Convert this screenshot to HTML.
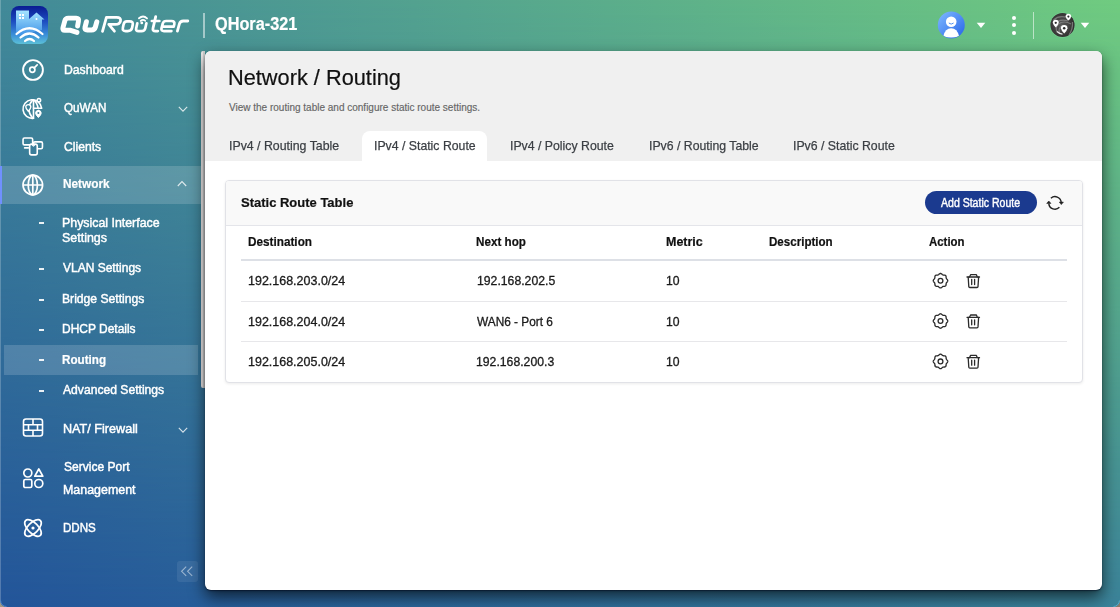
<!DOCTYPE html>
<html><head><meta charset="utf-8">
<style>
*{margin:0;padding:0;box-sizing:border-box}
html,body{width:1120px;height:607px;overflow:hidden}
body{position:relative;font-family:"Liberation Sans",sans-serif;
background:linear-gradient(to right,#23559a,#3b8399);}
#bgtop{position:absolute;left:0;top:0;width:1120px;height:607px;background:linear-gradient(to right,#428a98,#70cb80);-webkit-mask-image:linear-gradient(to bottom,#000,rgba(0,0,0,0));mask-image:linear-gradient(to bottom,#000,rgba(0,0,0,0))}
.a{position:absolute}
.t{position:absolute;white-space:nowrap;line-height:1;transform-origin:0 0}
.dash{position:absolute;left:38.6px;width:5.8px;height:2px;background:rgba(255,255,255,0.9)}
</style></head>
<body>
<div id="bgtop"></div>
<div class="a" style="left:0;top:0;width:1px;height:607px;background:rgba(255,255,255,0.22)"></div>

<!-- logo -->
<div class="a" style="left:11px;top:6px;width:37px;height:38px;border-radius:8px;background:linear-gradient(#0a1c92 0%,#1d4cc0 40%,#3a8ed8 75%,#5cc0d8 100%);overflow:hidden">
  <svg width="37" height="38" viewBox="0 0 37 38">
    <defs><linearGradient id="bld" x1="0" y1="0" x2="0" y2="1"><stop offset="0" stop-color="#a5e4ff"/><stop offset="1" stop-color="#3d90e6"/></linearGradient></defs>
    <path d="M5 4.5 H18 V13 L25.5 6.5 L33.5 13.5 L31 13.5 V24 L5 30 Z" fill="url(#bld)"/>
    <rect x="8" y="8" width="2" height="2" fill="#fff"/><rect x="11" y="8" width="2" height="2" fill="#fff"/>
    <rect x="8" y="11" width="2" height="2" fill="#fff"/><rect x="11" y="11" width="2" height="2" fill="#fff"/>
    <circle cx="25.5" cy="13" r="1" fill="#fff"/>
    <path d="M5.5 28 Q18.5 16.5 31.5 28" stroke="#fff" stroke-width="2.2" fill="none" stroke-linecap="round"/>
    <path d="M9.5 31.5 Q18.5 23.5 27.5 31.5" stroke="#fff" stroke-width="2.2" fill="none" stroke-linecap="round"/>
    <path d="M14 35 Q18.5 31 23 35" stroke="#fff" stroke-width="2.2" fill="none" stroke-linecap="round"/>
  </svg>
</div>
<!-- QuRouter wordmark -->
<svg class="a" style="left:55px;top:10px" width="140" height="30" viewBox="55 10 140 30">
  <g fill="none" stroke="#fff" stroke-linecap="round" stroke-linejoin="round">
    <path d="M77.6 26 L78.5 21 Q79.1 18.1 76.2 18.1 H68.2 Q65.5 18.1 64.8 20.8 L62.9 27.8 Q62.2 30.3 64.8 30.3 H70.6 L77 32.4" stroke-width="4.9"/>
    <path d="M86.4 21.8 L85 27.4 Q84.4 29.9 87.2 29.9 H91.6 Q94.6 29.9 95.4 27 L96.8 21.8" stroke-width="5"/>
    <path d="M102.5 31.3 L106.4 17.4 H116.6 Q121.2 17.4 120.5 20.9 Q119.8 24.4 115.4 24.4 H108.8 L114.4 31.2" stroke-width="2.8"/>
    <path d="M126.8 21.3 H129.6 Q133.4 21.3 132.7 24.8 L132.1 27.8 Q131.4 31.1 127.7 31.1 H125.6 Q122.2 31.1 122.9 27.7 L123.5 24.7 Q124.2 21.3 126.8 21.3 Z" stroke-width="2.7"/>
    <path d="M137.3 23.3 L136.2 28.2 Q135.5 31.1 138.6 31.1 H141.5 Q144.6 31.1 145.3 28.2 L146.4 23.3" stroke-width="2.7"/>
    <path d="M139 18.3 Q143.2 14.6 147 18.4" stroke-width="1.9"/>
    <path d="M140.6 20.9 Q143 18.8 145.3 20.9" stroke-width="1.6"/>
    <circle cx="141.8" cy="22.9" r="1.4" fill="#fff" stroke="none"/>
    <path d="M155.7 16.6 L153 28.2 Q152.3 31.1 155.4 31.1 H157.8" stroke-width="2.8"/>
    <path d="M151.8 21 H159.4" stroke-width="2.6"/>
    <path d="M171.4 31.1 H164 Q160.9 31.1 161.5 28.4 L162.8 23.4 Q163.5 21 166.2 21 H171.6 Q175 21 174.3 24.2 L173.7 26.7 H162.5" stroke-width="2.7"/>
    <path d="M177.4 31.1 L179.4 23.8 Q180.2 21 183.3 21 H187.8" stroke-width="2.8"/>
  </g>
</svg>
<div class="a" style="left:203px;top:12.5px;width:2px;height:25px;background:rgba(255,255,255,0.5)"></div>

<!-- top right icons -->
<svg class="a" style="left:937px;top:11px" width="29" height="29" viewBox="0 0 29 29">
  <defs><linearGradient id="av" x1="0" y1="0" x2="1" y2="1"><stop offset="0" stop-color="#80baff"/><stop offset="1" stop-color="#2563e8"/></linearGradient>
  <clipPath id="avc"><circle cx="14.3" cy="14" r="13.2"/></clipPath></defs>
  <circle cx="14.3" cy="14" r="13.5" fill="url(#av)"/>
  <g clip-path="url(#avc)">
    <circle cx="14.2" cy="10.7" r="5.3" fill="#fff"/>
    <path d="M6.3 25.2 Q8.2 17.2 14.2 17.2 Q20.2 17.2 22.1 25.2 Q14.2 27.6 6.3 25.2 Z" fill="#fff"/>
    <path d="M11.8 12 Q14.2 14.2 16.6 12" stroke="#4f8ff0" stroke-width="1" fill="none"/>
  </g>
</svg>
<svg class="a" style="left:976px;top:22px" width="10" height="7"><path d="M0.7 0.8 H9.3 L5 6 Z" fill="#fff"/></svg>
<div class="a" style="left:1011.8px;top:15.5px;width:4px;height:4px;border-radius:50%;background:#fff"></div>
<div class="a" style="left:1011.8px;top:23.1px;width:4px;height:4px;border-radius:50%;background:#fff"></div>
<div class="a" style="left:1011.8px;top:30.7px;width:4px;height:4px;border-radius:50%;background:#fff"></div>
<div class="a" style="left:1033px;top:12px;width:1px;height:26.5px;background:rgba(255,255,255,0.55)"></div>
<svg class="a" style="left:1049px;top:12px" width="27" height="27" viewBox="0 0 27 27">
  <defs><radialGradient id="gl" cx="0.45" cy="0.5" r="0.6"><stop offset="0" stop-color="#5a5a5a"/><stop offset="0.7" stop-color="#3a3838"/><stop offset="1" stop-color="#2a2829"/></radialGradient></defs>
  <circle cx="13.5" cy="13" r="12.6" fill="#7edc9e" opacity="0.6"/>
  <circle cx="13.5" cy="13" r="12.1" fill="url(#gl)"/>
  <g fill="none" stroke="#8c8c8c" stroke-width="1.2" opacity="0.75">
    <path d="M4.5 8 Q10 3 18 5.5"/><path d="M5 12 Q11 6.5 19 9"/><path d="M8 20 Q5 14 12 10.5 Q17 9 22 12"/><path d="M11 22 Q8 16 14 13.5"/><path d="M20 23 Q24 17 23.5 10"/>
  </g>
  <path d="M8 19.5 Q10.5 22 13.5 22.2" stroke="#e8e8e8" stroke-width="1.3" fill="none"/>
  <path d="M16.60 4.60 A2.8 2.8 0 1 1 22.20 4.60 Q21.64 7.12 19.40 8.60 Q17.16 7.12 16.60 4.60 Z" fill="#fff"/><circle cx="19.4" cy="4.6" r="1.06" fill="#2a2a2a"/>
  <path d="M3.75 10.80 A3.0 3.0 0 1 1 9.75 10.80 Q9.15 13.50 6.75 15.40 Q4.35 13.50 3.75 10.80 Z" fill="#fff"/><circle cx="6.75" cy="10.8" r="1.14" fill="#2a2a2a"/>
  <path d="M11.90 16.30 A3.3 3.3 0 1 1 18.50 16.30 Q17.84 19.27 15.20 21.60 Q12.56 19.27 11.90 16.30 Z" fill="#fff"/><circle cx="15.2" cy="16.3" r="1.25" fill="#2a2a2a"/>
</svg>
<svg class="a" style="left:1080px;top:22px" width="10" height="7"><path d="M0.7 0.8 H9.3 L5 6 Z" fill="#fff"/></svg>

<!-- sidebar highlights -->
<div class="a" style="left:0;top:165.5px;width:201px;height:38px;background:rgba(255,255,255,0.155)"></div>
<div class="a" style="left:0;top:165.5px;width:2.2px;height:38px;background:#7090ff"></div>
<div class="a" style="left:4px;top:345px;width:194px;height:30px;background:rgba(255,255,255,0.155)"></div>

<div class="dash" style="top:222px"></div>
<div class="dash" style="top:268px"></div>
<div class="dash" style="top:298.6px"></div>
<div class="dash" style="top:328.8px"></div>
<div class="dash" style="top:359.4px"></div>
<div class="dash" style="top:389.7px"></div>

<!-- chevrons -->
<svg class="a" style="left:178px;top:106px" width="11" height="7"><path d="M0.8 0.8 L5 5.2 L9.2 0.8" stroke="rgba(255,255,255,0.8)" stroke-width="1.1" fill="none"/></svg>
<svg class="a" style="left:176.5px;top:180px" width="11" height="7"><path d="M0.8 6 L5 1.5 L9.2 6" stroke="rgba(255,255,255,0.8)" stroke-width="1.1" fill="none"/></svg>
<svg class="a" style="left:178px;top:426.5px" width="11" height="7"><path d="M0.8 0.8 L5 5.2 L9.2 0.8" stroke="rgba(255,255,255,0.8)" stroke-width="1.1" fill="none"/></svg>

<!-- sidebar icons -->
<svg class="a" style="left:21px;top:58px" width="24" height="24" viewBox="0 0 24 24" fill="none" stroke="#fff">
  <circle cx="12" cy="12" r="9.9" stroke-width="1.9"/><circle cx="11.3" cy="11.8" r="2.6" stroke-width="1.7"/><path d="M13.2 9.9 L16.2 6.9" stroke-width="1.7" stroke-linecap="round"/>
</svg>
<svg class="a" style="left:21px;top:96px" width="24" height="24" viewBox="0 0 24 24" fill="none" stroke="#fff" stroke-width="1.6" stroke-linecap="round" stroke-linejoin="round">
  <path d="M12.5 22.3 A9.3 9.3 0 1 1 20.57 12.2"/>
  <path d="M12.5 12.2 H20.6"/><path d="M12.5 3.8 V22.3"/>
  <path d="M11.8 3.8 Q3.8 13 11.8 22.3"/><path d="M12.5 3.8 Q16.6 7 17 12.2"/>
  <circle cx="17.9" cy="4.2" r="1.7" fill="#3b8199"/>
  <path d="M7.3 8.6 a2.5 2.5 0 0 1 2.5 2.5 q0 1.6 -2.5 4.2 q-2.5 -2.6 -2.5 -4.2 a2.5 2.5 0 0 1 2.5 -2.5 z" fill="#3b8199" stroke-width="1.4"/>
  <path d="M17.4 14.3 a2.8 2.8 0 0 1 2.8 2.8 q0 1.8 -2.8 4.4 q-2.8 -2.6 -2.8 -4.4 a2.8 2.8 0 0 1 2.8 -2.8 z" fill="#fff" stroke-width="1"/>
  <circle cx="17.4" cy="17.1" r="1" fill="#3b8199" stroke="none"/>
</svg>
<svg class="a" style="left:21px;top:134px" width="24" height="24" viewBox="0 0 24 24" fill="none" stroke="#fff" stroke-width="1.6" stroke-linejoin="round">
  <rect x="2.05" y="4.05" width="9.6" height="6.8" rx="1.4"/>
  <path d="M3.6 13.9 H7.4" stroke-linecap="round"/>
  <rect x="12.45" y="7.85" width="9" height="6.9" rx="1.4"/>
  <rect x="8.65" y="10.15" width="7.6" height="10.7" rx="1.8" fill="#3a7d9a"/>
  <path d="M10.7 10.6 L12.45 12.1 L14.2 10.6" stroke-width="1.1"/>
</svg>
<svg class="a" style="left:21px;top:172.5px" width="24" height="24" viewBox="0 0 24 24" fill="none" stroke="#fff" stroke-width="1.7">
  <circle cx="11.8" cy="12" r="9.8"/><ellipse cx="11.8" cy="12" rx="4.6" ry="9.8"/><path d="M11.8 2.2 V21.8 M2 12 H21.6"/>
</svg>
<svg class="a" style="left:21px;top:416px" width="24" height="24" viewBox="0 0 24 24" fill="none" stroke="#fff" stroke-width="1.6">
  <rect x="2.5" y="3" width="19" height="17" rx="2.5"/>
  <path d="M2.5 8.7 H21.5 M2.5 14.3 H21.5 M12 3 V8.7 M7.5 8.7 V14.3 M16.5 8.7 V14.3 M12 14.3 V20"/>
</svg>
<svg class="a" style="left:21px;top:466px" width="24" height="24" viewBox="0 0 24 24" fill="none" stroke="#fff" stroke-width="1.7">
  <circle cx="6.8" cy="7" r="4"/><path d="M17.8 3 L21.8 10.2 H13.8 Z" stroke-linejoin="round"/>
  <rect x="2.8" y="13.5" width="8" height="8" rx="1.6"/><circle cx="17.8" cy="17.5" r="4"/>
</svg>
<svg class="a" style="left:21px;top:515.5px" width="24" height="24" viewBox="0 0 24 24" fill="none" stroke="#fff" stroke-width="1.7">
  <ellipse cx="12" cy="12" rx="10.5" ry="5.2" transform="rotate(45 12 12)"/>
  <ellipse cx="12" cy="12" rx="10.5" ry="5.2" transform="rotate(-45 12 12)"/>
  <circle cx="12" cy="12" r="1.6" fill="#fff" stroke="none"/>
</svg>

<!-- scrollbar -->
<div class="a" style="left:201px;top:51px;width:4px;height:337px;border-radius:2px 0 0 2px;background:linear-gradient(90deg,#f0eaea 0,#f0eaea 2px,#d2d2d2 2px)"></div>

<!-- collapse button -->
<div class="a" style="left:177px;top:560.5px;width:21px;height:21.5px;border-radius:3px;background:rgba(255,255,255,0.08)"></div>
<svg class="a" style="left:177px;top:561px" width="21" height="21"><path d="M9.2 5.7 L4.6 10.3 L9.2 14.9 M15.2 5.7 L10.6 10.3 L15.2 14.9" stroke="rgba(255,255,255,0.5)" stroke-width="1.1" fill="none"/></svg>

<!-- main panel -->
<div class="a" style="left:205px;top:51px;width:897px;height:538.5px;background:#fff;border-radius:6px;box-shadow:0 1px 1.5px rgba(0,10,30,0.6),0 7px 16px rgba(0,0,0,0.65);overflow:hidden">
  <div class="a" style="left:0;top:0;width:897px;height:110px;background:#f0f0f0"></div>
  <div class="a" style="left:157px;top:80px;width:125px;height:30px;background:#fff;border-radius:8px 8px 0 0"></div>
  <!-- card -->
  <div class="a" style="left:19.5px;top:129px;width:858.5px;height:202.5px;border:1px solid #e1e2e7;border-radius:4px;box-shadow:0 1px 3px rgba(0,0,0,0.08);background:#fff;overflow:hidden">
    <div class="a" style="left:0;top:0;width:100%;height:44.5px;background:#f9f9f9;border-bottom:1px solid #e4e5ea"></div>
  </div>
  <div class="a" style="left:36px;top:208px;width:825.5px;height:2px;background:#dde0e6"></div>
  <div class="a" style="left:36px;top:250px;width:825.5px;height:1px;background:#e7e7ea"></div>
  <div class="a" style="left:36px;top:290px;width:825.5px;height:1px;background:#e7e7ea"></div>
  <div class="a" style="left:720px;top:140px;width:111.5px;height:23px;border-radius:12px;background:#1b3a8f"></div>
</div>

<!-- refresh icon -->
<svg class="a" style="left:1045px;top:193px" width="22" height="19" viewBox="0 0 22 19" fill="none" stroke="#222" stroke-width="1.45">
  <path d="M5.9 5.2 A6.2 6.2 0 0 1 16.2 9.3"/>
  <path d="M14.4 14.3 A6.2 6.2 0 0 1 3.8 10.6"/>
  <path d="M14.3 9.1 H18.4 L16.3 11.6 Z" fill="#222" stroke-width="0.6" stroke-linejoin="round"/>
  <path d="M1.7 10.4 H5.9 L3.8 8 Z" fill="#222" stroke-width="0.6" stroke-linejoin="round"/>
</svg>

<!-- action icons -->
<svg width="0" height="0" style="position:absolute">
  <defs>
    <g id="gear" fill="none" stroke="#2d2d2d" stroke-width="1.3">
      <path id="gp"/>
      <circle cx="9" cy="9" r="2.5"/>
    </g>
  </defs>
</svg>
<svg class="a" style="left:0;top:0;overflow:visible" width="1" height="1"><g fill="none" stroke="#2b2b2b" stroke-width="1.3"><path d="M947.75 280.70 L947.72 280.98 L947.63 281.26 L947.50 281.53 L947.32 281.78 L947.12 282.02 L946.91 282.24 L946.71 282.45 L946.53 282.66 L946.39 282.87 L946.27 283.09 L946.20 283.33 L946.15 283.58 L946.13 283.85 L946.12 284.15 L946.11 284.45 L946.09 284.76 L946.03 285.06 L945.94 285.35 L945.81 285.60 L945.63 285.83 L945.40 286.01 L945.15 286.14 L944.86 286.23 L944.56 286.29 L944.25 286.31 L943.95 286.32 L943.65 286.33 L943.38 286.35 L943.13 286.40 L942.89 286.47 L942.67 286.59 L942.46 286.73 L942.25 286.91 L942.04 287.11 L941.82 287.32 L941.58 287.52 L941.33 287.70 L941.06 287.83 L940.78 287.92 L940.50 287.95 L940.22 287.92 L939.94 287.83 L939.67 287.70 L939.42 287.52 L939.18 287.32 L938.96 287.11 L938.75 286.91 L938.54 286.73 L938.33 286.59 L938.11 286.47 L937.87 286.40 L937.62 286.35 L937.35 286.33 L937.05 286.32 L936.75 286.31 L936.44 286.29 L936.14 286.23 L935.85 286.14 L935.60 286.01 L935.37 285.83 L935.19 285.60 L935.06 285.35 L934.97 285.06 L934.91 284.76 L934.89 284.45 L934.88 284.15 L934.87 283.85 L934.85 283.58 L934.80 283.33 L934.73 283.09 L934.61 282.87 L934.47 282.66 L934.29 282.45 L934.09 282.24 L933.88 282.02 L933.68 281.78 L933.50 281.53 L933.37 281.26 L933.28 280.98 L933.25 280.70 L933.28 280.42 L933.37 280.14 L933.50 279.87 L933.68 279.62 L933.88 279.38 L934.09 279.16 L934.29 278.95 L934.47 278.74 L934.61 278.53 L934.73 278.31 L934.80 278.07 L934.85 277.82 L934.87 277.55 L934.88 277.25 L934.89 276.95 L934.91 276.64 L934.97 276.34 L935.06 276.05 L935.19 275.80 L935.37 275.57 L935.60 275.39 L935.85 275.26 L936.14 275.17 L936.44 275.11 L936.75 275.09 L937.05 275.08 L937.35 275.07 L937.62 275.05 L937.87 275.00 L938.11 274.93 L938.33 274.81 L938.54 274.67 L938.75 274.49 L938.96 274.29 L939.18 274.08 L939.42 273.88 L939.67 273.70 L939.94 273.57 L940.22 273.48 L940.50 273.45 L940.78 273.48 L941.06 273.57 L941.33 273.70 L941.58 273.88 L941.82 274.08 L942.04 274.29 L942.25 274.49 L942.46 274.67 L942.67 274.81 L942.89 274.93 L943.13 275.00 L943.38 275.05 L943.65 275.07 L943.95 275.08 L944.25 275.09 L944.56 275.11 L944.86 275.17 L945.15 275.26 L945.40 275.39 L945.63 275.57 L945.81 275.80 L945.94 276.05 L946.03 276.34 L946.09 276.64 L946.11 276.95 L946.12 277.25 L946.13 277.55 L946.15 277.82 L946.20 278.07 L946.27 278.31 L946.39 278.53 L946.53 278.74 L946.71 278.95 L946.91 279.16 L947.12 279.38 L947.32 279.62 L947.50 279.87 L947.63 280.14 L947.72 280.42 Z"/><circle cx="940.5" cy="280.7" r="2.4"/></g><g fill="none" stroke="#2b2b2b" stroke-width="1.3" stroke-linecap="round" stroke-linejoin="round" transform="translate(0 0.00)"><path d="M967 277 H979.5"/><path d="M969.5 277 L970.6 274.7 H976.4 L977.3 277"/><path d="M968.2 277.2 L968.8 286.6 Q968.9 287.5 969.8 287.5 H977 Q977.9 287.5 978 286.6 L978.6 277.2"/><path d="M971.7 279.5 V284.5 M974.6 279.5 V284.5"/></g></svg>
<svg class="a" style="left:0;top:0;overflow:visible" width="1" height="1"><g fill="none" stroke="#2b2b2b" stroke-width="1.3"><path d="M947.75 321.00 L947.72 321.28 L947.63 321.56 L947.50 321.83 L947.32 322.08 L947.12 322.32 L946.91 322.54 L946.71 322.75 L946.53 322.96 L946.39 323.17 L946.27 323.39 L946.20 323.63 L946.15 323.88 L946.13 324.15 L946.12 324.45 L946.11 324.75 L946.09 325.06 L946.03 325.36 L945.94 325.65 L945.81 325.90 L945.63 326.13 L945.40 326.31 L945.15 326.44 L944.86 326.53 L944.56 326.59 L944.25 326.61 L943.95 326.62 L943.65 326.63 L943.38 326.65 L943.13 326.70 L942.89 326.77 L942.67 326.89 L942.46 327.03 L942.25 327.21 L942.04 327.41 L941.82 327.62 L941.58 327.82 L941.33 328.00 L941.06 328.13 L940.78 328.22 L940.50 328.25 L940.22 328.22 L939.94 328.13 L939.67 328.00 L939.42 327.82 L939.18 327.62 L938.96 327.41 L938.75 327.21 L938.54 327.03 L938.33 326.89 L938.11 326.77 L937.87 326.70 L937.62 326.65 L937.35 326.63 L937.05 326.62 L936.75 326.61 L936.44 326.59 L936.14 326.53 L935.85 326.44 L935.60 326.31 L935.37 326.13 L935.19 325.90 L935.06 325.65 L934.97 325.36 L934.91 325.06 L934.89 324.75 L934.88 324.45 L934.87 324.15 L934.85 323.88 L934.80 323.63 L934.73 323.39 L934.61 323.17 L934.47 322.96 L934.29 322.75 L934.09 322.54 L933.88 322.32 L933.68 322.08 L933.50 321.83 L933.37 321.56 L933.28 321.28 L933.25 321.00 L933.28 320.72 L933.37 320.44 L933.50 320.17 L933.68 319.92 L933.88 319.68 L934.09 319.46 L934.29 319.25 L934.47 319.04 L934.61 318.83 L934.73 318.61 L934.80 318.37 L934.85 318.12 L934.87 317.85 L934.88 317.55 L934.89 317.25 L934.91 316.94 L934.97 316.64 L935.06 316.35 L935.19 316.10 L935.37 315.87 L935.60 315.69 L935.85 315.56 L936.14 315.47 L936.44 315.41 L936.75 315.39 L937.05 315.38 L937.35 315.37 L937.62 315.35 L937.87 315.30 L938.11 315.23 L938.33 315.11 L938.54 314.97 L938.75 314.79 L938.96 314.59 L939.18 314.38 L939.42 314.18 L939.67 314.00 L939.94 313.87 L940.22 313.78 L940.50 313.75 L940.78 313.78 L941.06 313.87 L941.33 314.00 L941.58 314.18 L941.82 314.38 L942.04 314.59 L942.25 314.79 L942.46 314.97 L942.67 315.11 L942.89 315.23 L943.13 315.30 L943.38 315.35 L943.65 315.37 L943.95 315.38 L944.25 315.39 L944.56 315.41 L944.86 315.47 L945.15 315.56 L945.40 315.69 L945.63 315.87 L945.81 316.10 L945.94 316.35 L946.03 316.64 L946.09 316.94 L946.11 317.25 L946.12 317.55 L946.13 317.85 L946.15 318.12 L946.20 318.37 L946.27 318.61 L946.39 318.83 L946.53 319.04 L946.71 319.25 L946.91 319.46 L947.12 319.68 L947.32 319.92 L947.50 320.17 L947.63 320.44 L947.72 320.72 Z"/><circle cx="940.5" cy="321.0" r="2.4"/></g><g fill="none" stroke="#2b2b2b" stroke-width="1.3" stroke-linecap="round" stroke-linejoin="round" transform="translate(0 40.30)"><path d="M967 277 H979.5"/><path d="M969.5 277 L970.6 274.7 H976.4 L977.3 277"/><path d="M968.2 277.2 L968.8 286.6 Q968.9 287.5 969.8 287.5 H977 Q977.9 287.5 978 286.6 L978.6 277.2"/><path d="M971.7 279.5 V284.5 M974.6 279.5 V284.5"/></g></svg>
<svg class="a" style="left:0;top:0;overflow:visible" width="1" height="1"><g fill="none" stroke="#2b2b2b" stroke-width="1.3"><path d="M947.75 361.40 L947.72 361.68 L947.63 361.96 L947.50 362.23 L947.32 362.48 L947.12 362.72 L946.91 362.94 L946.71 363.15 L946.53 363.36 L946.39 363.57 L946.27 363.79 L946.20 364.03 L946.15 364.28 L946.13 364.55 L946.12 364.85 L946.11 365.15 L946.09 365.46 L946.03 365.76 L945.94 366.05 L945.81 366.30 L945.63 366.53 L945.40 366.71 L945.15 366.84 L944.86 366.93 L944.56 366.99 L944.25 367.01 L943.95 367.02 L943.65 367.03 L943.38 367.05 L943.13 367.10 L942.89 367.17 L942.67 367.29 L942.46 367.43 L942.25 367.61 L942.04 367.81 L941.82 368.02 L941.58 368.22 L941.33 368.40 L941.06 368.53 L940.78 368.62 L940.50 368.65 L940.22 368.62 L939.94 368.53 L939.67 368.40 L939.42 368.22 L939.18 368.02 L938.96 367.81 L938.75 367.61 L938.54 367.43 L938.33 367.29 L938.11 367.17 L937.87 367.10 L937.62 367.05 L937.35 367.03 L937.05 367.02 L936.75 367.01 L936.44 366.99 L936.14 366.93 L935.85 366.84 L935.60 366.71 L935.37 366.53 L935.19 366.30 L935.06 366.05 L934.97 365.76 L934.91 365.46 L934.89 365.15 L934.88 364.85 L934.87 364.55 L934.85 364.28 L934.80 364.03 L934.73 363.79 L934.61 363.57 L934.47 363.36 L934.29 363.15 L934.09 362.94 L933.88 362.72 L933.68 362.48 L933.50 362.23 L933.37 361.96 L933.28 361.68 L933.25 361.40 L933.28 361.12 L933.37 360.84 L933.50 360.57 L933.68 360.32 L933.88 360.08 L934.09 359.86 L934.29 359.65 L934.47 359.44 L934.61 359.23 L934.73 359.01 L934.80 358.77 L934.85 358.52 L934.87 358.25 L934.88 357.95 L934.89 357.65 L934.91 357.34 L934.97 357.04 L935.06 356.75 L935.19 356.50 L935.37 356.27 L935.60 356.09 L935.85 355.96 L936.14 355.87 L936.44 355.81 L936.75 355.79 L937.05 355.78 L937.35 355.77 L937.62 355.75 L937.87 355.70 L938.11 355.63 L938.33 355.51 L938.54 355.37 L938.75 355.19 L938.96 354.99 L939.18 354.78 L939.42 354.58 L939.67 354.40 L939.94 354.27 L940.22 354.18 L940.50 354.15 L940.78 354.18 L941.06 354.27 L941.33 354.40 L941.58 354.58 L941.82 354.78 L942.04 354.99 L942.25 355.19 L942.46 355.37 L942.67 355.51 L942.89 355.63 L943.13 355.70 L943.38 355.75 L943.65 355.77 L943.95 355.78 L944.25 355.79 L944.56 355.81 L944.86 355.87 L945.15 355.96 L945.40 356.09 L945.63 356.27 L945.81 356.50 L945.94 356.75 L946.03 357.04 L946.09 357.34 L946.11 357.65 L946.12 357.95 L946.13 358.25 L946.15 358.52 L946.20 358.77 L946.27 359.01 L946.39 359.23 L946.53 359.44 L946.71 359.65 L946.91 359.86 L947.12 360.08 L947.32 360.32 L947.50 360.57 L947.63 360.84 L947.72 361.12 Z"/><circle cx="940.5" cy="361.4" r="2.4"/></g><g fill="none" stroke="#2b2b2b" stroke-width="1.3" stroke-linecap="round" stroke-linejoin="round" transform="translate(0 80.70)"><path d="M967 277 H979.5"/><path d="M969.5 277 L970.6 274.7 H976.4 L977.3 277"/><path d="M968.2 277.2 L968.8 286.6 Q968.9 287.5 969.8 287.5 H977 Q977.9 287.5 978 286.6 L978.6 277.2"/><path d="M971.7 279.5 V284.5 M974.6 279.5 V284.5"/></g></svg>

<div class="t" style="left:214.87px;top:15.99px;font-size:17.5px;font-weight:bold;font-style:normal;color:#fff;transform:scaleX(0.9299);-webkit-text-stroke:0.2px #fff">QHora-321</div>
<div class="t" style="left:63.95px;top:64.42px;font-size:12.8px;font-weight:normal;font-style:normal;color:#fff;transform:scaleX(0.9541);-webkit-text-stroke:0.45px #fff">Dashboard</div>
<div class="t" style="left:64.29px;top:101.67px;font-size:12.8px;font-weight:normal;font-style:normal;color:#fff;transform:scaleX(0.9122);-webkit-text-stroke:0.45px #fff">QuWAN</div>
<div class="t" style="left:64.25px;top:140.77px;font-size:12.8px;font-weight:normal;font-style:normal;color:#fff;transform:scaleX(0.9487);-webkit-text-stroke:0.45px #fff">Clients</div>
<div class="t" style="left:63.42px;top:178.26px;font-size:12.1px;font-weight:bold;font-style:normal;color:#fff;transform:scaleX(0.9766);-webkit-text-stroke:0.2px #fff">Network</div>
<div class="t" style="left:61.78px;top:216.77px;font-size:12.8px;font-weight:normal;font-style:normal;color:#fff;transform:scaleX(0.9665);-webkit-text-stroke:0.45px #fff">Physical Interface</div>
<div class="t" style="left:61.78px;top:231.87px;font-size:12.8px;font-weight:normal;font-style:normal;color:#fff;transform:scaleX(0.9722);-webkit-text-stroke:0.45px #fff">Settings</div>
<div class="t" style="left:62.75px;top:262.37px;font-size:12.8px;font-weight:normal;font-style:normal;color:#fff;transform:scaleX(0.9380);-webkit-text-stroke:0.45px #fff">VLAN Settings</div>
<div class="t" style="left:61.80px;top:293.37px;font-size:12.8px;font-weight:normal;font-style:normal;color:#fff;transform:scaleX(0.9494);-webkit-text-stroke:0.45px #fff">Bridge Settings</div>
<div class="t" style="left:61.81px;top:323.47px;font-size:12.8px;font-weight:normal;font-style:normal;color:#fff;transform:scaleX(0.9351);-webkit-text-stroke:0.45px #fff">DHCP Details</div>
<div class="t" style="left:61.74px;top:354.26px;font-size:12.1px;font-weight:bold;font-style:normal;color:#fff;transform:scaleX(0.9636);-webkit-text-stroke:0.2px #fff">Routing</div>
<div class="t" style="left:62.70px;top:384.37px;font-size:12.8px;font-weight:normal;font-style:normal;color:#fff;transform:scaleX(0.9481);-webkit-text-stroke:0.45px #fff">Advanced Settings</div>
<div class="t" style="left:63.01px;top:422.97px;font-size:12.8px;font-weight:normal;font-style:normal;color:#fff;transform:scaleX(0.9865);-webkit-text-stroke:0.45px #fff">NAT/ Firewall</div>
<div class="t" style="left:63.66px;top:460.87px;font-size:12.8px;font-weight:normal;font-style:normal;color:#fff;transform:scaleX(0.9406);-webkit-text-stroke:0.45px #fff">Service Port</div>
<div class="t" style="left:63.03px;top:484.07px;font-size:12.8px;font-weight:normal;font-style:normal;color:#fff;transform:scaleX(0.9716);-webkit-text-stroke:0.45px #fff">Management</div>
<div class="t" style="left:63.09px;top:521.87px;font-size:12.8px;font-weight:normal;font-style:normal;color:#fff;transform:scaleX(0.9057);-webkit-text-stroke:0.45px #fff">DDNS</div>
<div class="t" style="left:227.98px;top:67.50px;font-size:21.5px;font-weight:normal;font-style:normal;color:#111;transform:scaleX(1.0119);-webkit-text-stroke:0.2px #111">Network / Routing</div>
<div class="t" style="left:229.00px;top:103.04px;font-size:10px;font-weight:normal;font-style:normal;color:#666;transform:scaleX(1.0000);-webkit-text-stroke:0.15px #666">View the routing table and configure static route settings.</div>
<div class="t" style="left:228.56px;top:139.03px;font-size:13.2px;font-weight:normal;font-style:normal;color:#3b3f44;transform:scaleX(0.9353);-webkit-text-stroke:0.25px #3b3f44">IPv4 / Routing Table</div>
<div class="t" style="left:373.57px;top:139.03px;font-size:13.2px;font-weight:normal;font-style:normal;color:#3b3f44;transform:scaleX(0.9306);-webkit-text-stroke:0.25px #3b3f44">IPv4 / Static Route</div>
<div class="t" style="left:509.57px;top:139.03px;font-size:13.2px;font-weight:normal;font-style:normal;color:#3b3f44;transform:scaleX(0.9318);-webkit-text-stroke:0.25px #3b3f44">IPv4 / Policy Route</div>
<div class="t" style="left:648.57px;top:139.03px;font-size:13.2px;font-weight:normal;font-style:normal;color:#3b3f44;transform:scaleX(0.9310);-webkit-text-stroke:0.25px #3b3f44">IPv6 / Routing Table</div>
<div class="t" style="left:792.82px;top:139.03px;font-size:13.2px;font-weight:normal;font-style:normal;color:#3b3f44;transform:scaleX(0.9319);-webkit-text-stroke:0.25px #3b3f44">IPv6 / Static Route</div>
<div class="t" style="left:241.23px;top:196.06px;font-size:13.4px;font-weight:bold;font-style:normal;color:#111;transform:scaleX(0.9702);-webkit-text-stroke:0.2px #111">Static Route Table</div>
<div class="t" style="left:941.20px;top:196.54px;font-size:12px;font-weight:normal;font-style:normal;color:#fff;transform:scaleX(0.8778);-webkit-text-stroke:0.4px #fff">Add Static Route</div>
<div class="t" style="left:247.83px;top:236.06px;font-size:12.1px;font-weight:bold;font-style:normal;color:#111;transform:scaleX(0.9719);-webkit-text-stroke:0.2px #111">Destination</div>
<div class="t" style="left:476.14px;top:236.06px;font-size:12.1px;font-weight:bold;font-style:normal;color:#111;transform:scaleX(0.9640);-webkit-text-stroke:0.2px #111">Next hop</div>
<div class="t" style="left:665.97px;top:236.06px;font-size:12.1px;font-weight:bold;font-style:normal;color:#111;transform:scaleX(1.0324);-webkit-text-stroke:0.2px #111">Metric</div>
<div class="t" style="left:768.94px;top:236.06px;font-size:12.1px;font-weight:bold;font-style:normal;color:#111;transform:scaleX(0.9569);-webkit-text-stroke:0.2px #111">Description</div>
<div class="t" style="left:928.70px;top:236.06px;font-size:12.1px;font-weight:bold;font-style:normal;color:#111;transform:scaleX(0.9432);-webkit-text-stroke:0.2px #111">Action</div>
<div class="t" style="left:248.29px;top:274.80px;font-size:12.4px;font-weight:normal;font-style:normal;color:#1a1a1a;transform:scaleX(1.0074);-webkit-text-stroke:0.3px #1a1a1a">192.168.203.0/24</div>
<div class="t" style="left:476.51px;top:274.80px;font-size:12.4px;font-weight:normal;font-style:normal;color:#1a1a1a;transform:scaleX(0.9872);-webkit-text-stroke:0.3px #1a1a1a">192.168.202.5</div>
<div class="t" style="left:666.42px;top:274.80px;font-size:12.4px;font-weight:normal;font-style:normal;color:#1a1a1a;transform:scaleX(0.9846);-webkit-text-stroke:0.3px #1a1a1a">10</div>
<div class="t" style="left:248.29px;top:316.00px;font-size:12.4px;font-weight:normal;font-style:normal;color:#1a1a1a;transform:scaleX(1.0074);-webkit-text-stroke:0.3px #1a1a1a">192.168.204.0/24</div>
<div class="t" style="left:477.10px;top:316.00px;font-size:12.4px;font-weight:normal;font-style:normal;color:#1a1a1a;transform:scaleX(0.9557);-webkit-text-stroke:0.3px #1a1a1a">WAN6 - Port 6</div>
<div class="t" style="left:666.42px;top:316.00px;font-size:12.4px;font-weight:normal;font-style:normal;color:#1a1a1a;transform:scaleX(0.9846);-webkit-text-stroke:0.3px #1a1a1a">10</div>
<div class="t" style="left:248.29px;top:355.75px;font-size:12.4px;font-weight:normal;font-style:normal;color:#1a1a1a;transform:scaleX(1.0074);-webkit-text-stroke:0.3px #1a1a1a">192.168.205.0/24</div>
<div class="t" style="left:476.11px;top:355.75px;font-size:12.4px;font-weight:normal;font-style:normal;color:#1a1a1a;transform:scaleX(0.9872);-webkit-text-stroke:0.3px #1a1a1a">192.168.200.3</div>
<div class="t" style="left:666.42px;top:355.75px;font-size:12.4px;font-weight:normal;font-style:normal;color:#1a1a1a;transform:scaleX(0.9846);-webkit-text-stroke:0.3px #1a1a1a">10</div>
<svg class="a" style="left:0;top:595px" width="12" height="12" viewBox="0 0 12 12">
  <path d="M0 5.5 A6.5 6.5 0 0 0 6.5 12 H0 Z" fill="#a09a86"/>
  <path d="M0.6 5.5 A6 6 0 0 0 6.5 11.5" stroke="#4f8ad4" stroke-width="0.9" fill="none" opacity="0.9"/>
</svg>
<svg class="a" style="left:1108px;top:595px" width="12" height="12" viewBox="0 0 12 12">
  <path d="M12 5.5 A6.5 6.5 0 0 1 5.5 12 H12 Z" fill="#8a7a68"/>
  <path d="M11.4 5.5 A6 6 0 0 1 5.5 11.5" stroke="#5ab4d8" stroke-width="0.9" fill="none" opacity="0.9"/>
</svg>
</body></html>
